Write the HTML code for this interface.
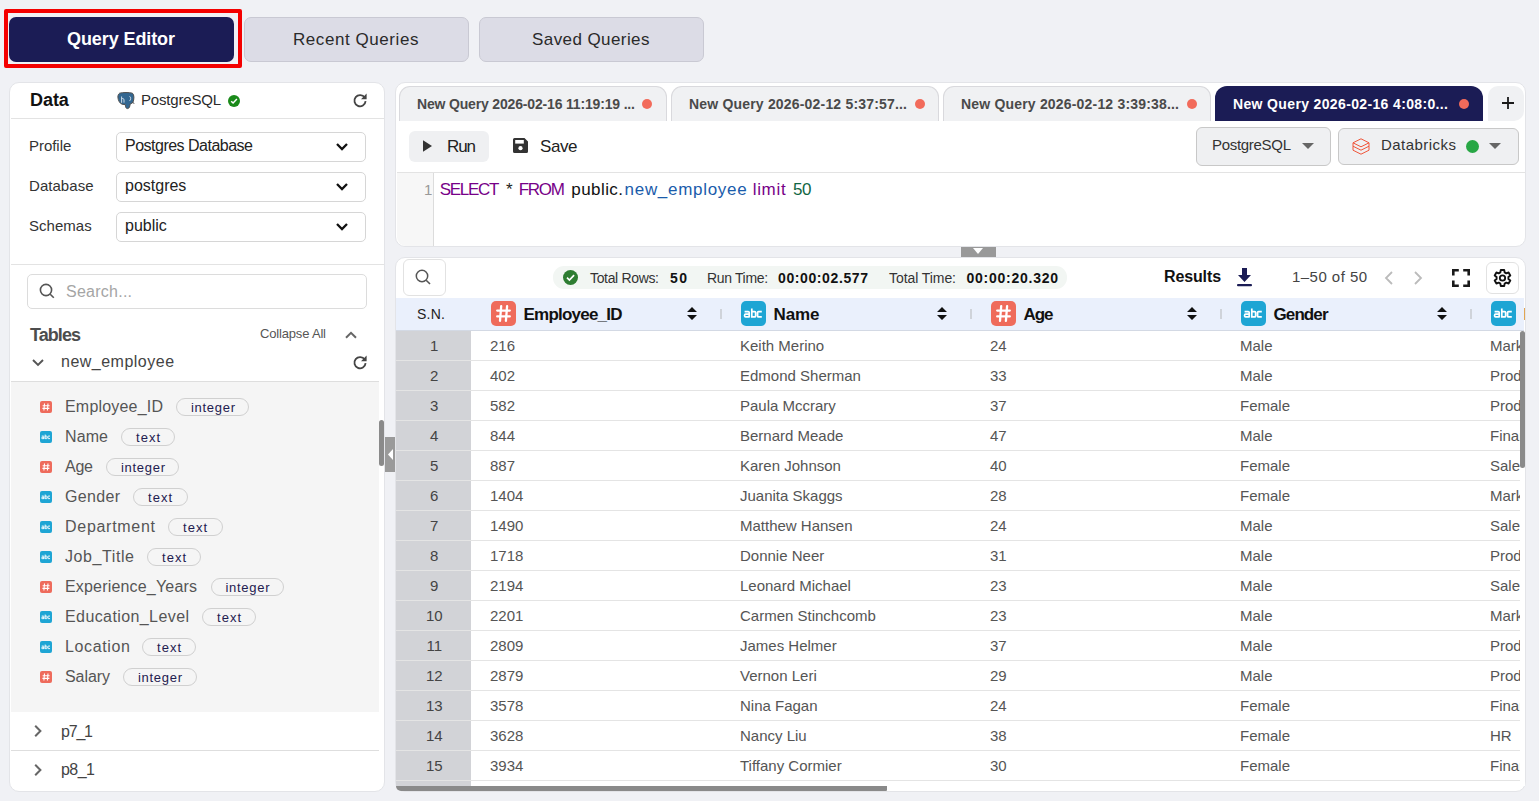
<!DOCTYPE html>
<html><head><meta charset="utf-8">
<style>
*{box-sizing:border-box;margin:0;padding:0}
html,body{width:1539px;height:801px;overflow:hidden;background:#f0f1f5;font-family:"Liberation Sans",sans-serif;color:#333;position:relative}
.a{position:absolute}
.t{white-space:nowrap;line-height:1}
svg{position:absolute;overflow:visible}
</style></head><body>
<div class="a" style="left:4px;top:9px;width:238px;height:59px;border:4px solid #f40000;border-radius:2px"></div>
<div class="a" style="left:9px;top:17px;width:225px;height:45px;background:#1b1c55;border-radius:7px"></div>
<div class="a" style="left:244px;top:17px;width:225px;height:45px;background:#dcdce6;border:1px solid #c9c9d3;border-radius:7px"></div>
<div class="a" style="left:479px;top:17px;width:225px;height:45px;background:#dcdce6;border:1px solid #c9c9d3;border-radius:7px"></div>
<div class="a t" style="left:67.0px;top:30px;font-size:18px;color:#fff;font-weight:bold;letter-spacing:-0.090px;">Query Editor</div>
<div class="a t" style="left:293.0px;top:31px;font-size:17px;color:#2a2a2a;letter-spacing:0.565px;">Recent Queries</div>
<div class="a t" style="left:532.0px;top:31px;font-size:17px;color:#2a2a2a;letter-spacing:0.420px;">Saved Queries</div>
<div class="a" style="left:9px;top:82px;width:376px;height:710px;background:#fff;border:1px solid #e3e4e8;border-radius:10px"></div>
<div class="a" style="left:11px;top:118px;width:373px;height:1px;background:#e3e3e3"></div>
<div class="a t" style="left:30.0px;top:91px;font-size:18px;color:#111;font-weight:bold;letter-spacing:-0.050px;">Data</div>
<svg style="left:117px;top:92px" width="18" height="17" viewBox="0 0 18 17"><path d="M2.6 1.2C5.5.3 12.5.3 15.4 1.2 17.4 2.6 17.3 7.5 15.8 10.6L13.1 12.2C12.9 14.3 12.5 16.3 10.6 16.6 8.9 16.8 8.4 14.8 8.3 12.6L5.2 12.3C2.6 11.4 1 8.2.9 5 .9 3.4 1.4 2 2.6 1.2Z" fill="#336791" stroke="#505050" stroke-width="1"/><path d="M4.6 4.5v6.3M4.6 6.8c1.3-.6 2.4-.3 2.4 1.2v2.6M12.6 4.3c1.4.8 1.4 3.5 0 4.6" stroke="#dfe8f0" stroke-width=".9" fill="none"/><path d="M15.5 10.5l1.8.9" stroke="#444" stroke-width="1"/></svg>
<div class="a t" style="left:141.0px;top:92px;font-size:15px;color:#2b2b2b;letter-spacing:-0.186px;">PostgreSQL</div>
<svg style="left:228px;top:94.5px" width="12" height="12" viewBox="0 0 12 12"><circle cx="6" cy="6" r="6" fill="#1a8a1a"/><path d="M3.2 6.2l1.9 1.8 3.8-3.9" stroke="#fff" stroke-width="1.5" fill="none"/></svg>
<svg style="left:352.5px;top:93px" width="14" height="14" viewBox="0 0 14 14"><path d="M11.7 4.6A5.6 5.6 0 1 0 12.6 8.2" stroke="#444" stroke-width="1.8" fill="none"/><path d="M13.6 0.6V6.2H8z" fill="#444"/></svg>
<div class="a" style="left:116px;top:132px;width:250px;height:30px;border:1px solid #d6d6d6;border-radius:5px;background:#fff"></div>
<div class="a t" style="left:29.0px;top:138px;font-size:15px;color:#333;letter-spacing:-0.038px;">Profile</div>
<div class="a t" style="left:125.0px;top:138px;font-size:16px;color:#222;letter-spacing:-0.505px;">Postgres Database</div>
<svg style="left:335.5px;top:143px" width="12" height="8" viewBox="0 0 12 8"><path d="M1 1l5 5 5-5" stroke="#111" stroke-width="2.3" fill="none"/></svg>
<div class="a" style="left:116px;top:172px;width:250px;height:30px;border:1px solid #d6d6d6;border-radius:5px;background:#fff"></div>
<div class="a t" style="left:29.0px;top:178px;font-size:15px;color:#333;letter-spacing:0.043px;">Database</div>
<div class="a t" style="left:125.0px;top:178px;font-size:16px;color:#222;">postgres</div>
<svg style="left:335.5px;top:183px" width="12" height="8" viewBox="0 0 12 8"><path d="M1 1l5 5 5-5" stroke="#111" stroke-width="2.3" fill="none"/></svg>
<div class="a" style="left:116px;top:212px;width:250px;height:30px;border:1px solid #d6d6d6;border-radius:5px;background:#fff"></div>
<div class="a t" style="left:29.0px;top:218px;font-size:15px;color:#333;letter-spacing:0.025px;">Schemas</div>
<div class="a t" style="left:125.0px;top:218px;font-size:16px;color:#222;">public</div>
<svg style="left:335.5px;top:223px" width="12" height="8" viewBox="0 0 12 8"><path d="M1 1l5 5 5-5" stroke="#111" stroke-width="2.3" fill="none"/></svg>
<div class="a" style="left:11px;top:264px;width:373px;height:1px;background:#e3e3e3"></div>
<div class="a" style="left:27px;top:274px;width:340px;height:35px;border:1px solid #dcdcdc;border-radius:5px;background:#fff"></div>
<svg style="left:39px;top:283px" width="16" height="16" viewBox="0 0 16 16"><circle cx="7" cy="7" r="5.6" stroke="#555" stroke-width="1.6" fill="none"/><path d="M11.2 11.2l3.6 3.6" stroke="#555" stroke-width="1.6"/></svg>
<div class="a t" style="left:66.0px;top:284px;font-size:16px;color:#a5a5a5;letter-spacing:0.250px;">Search...</div>
<div class="a t" style="left:30.0px;top:326px;font-size:18px;color:#4d4d4d;font-weight:bold;letter-spacing:-0.942px;">Tables</div>
<div class="a t" style="left:260.0px;top:327px;font-size:13px;color:#555;letter-spacing:-0.175px;">Collapse All</div>
<svg style="left:345px;top:331px" width="12" height="8" viewBox="0 0 12 8"><path d="M1 6.8l5-5 5 5" stroke="#666" stroke-width="2" fill="none"/></svg>
<svg style="left:32px;top:359px" width="12" height="8" viewBox="0 0 12 8"><path d="M1 1l5 5 5-5" stroke="#555" stroke-width="1.9" fill="none"/></svg>
<div class="a t" style="left:61.0px;top:354px;font-size:16px;color:#444;letter-spacing:0.491px;">new_employee</div>
<svg style="left:352.5px;top:355px" width="14" height="14" viewBox="0 0 14 14"><path d="M11.7 4.6A5.6 5.6 0 1 0 12.6 8.2" stroke="#444" stroke-width="1.8" fill="none"/><path d="M13.6 0.6V6.2H8z" fill="#444"/></svg>
<div class="a" style="left:11px;top:381px;width:368px;height:1px;background:#dedede"></div>
<div class="a" style="left:11px;top:382px;width:368px;height:330px;background:#f5f5f5"></div>
<svg style="left:40px;top:401px" width="12" height="12" viewBox="0 0 12 12"><rect width="12" height="12" rx="2" fill="#ee6b5c"/><path d="M4.5 2.5l-.6 7M8 2.5l-.6 7M2.6 4.8h7M2.4 7.4h7" stroke="#fff" stroke-width="1.1"/></svg>
<div class="a t" style="left:65.0px;top:399px;font-size:16px;color:#555;letter-spacing:0.192px;">Employee_ID</div>
<div class="a" style="left:176px;top:398px;width:73px;height:18px;border:1px solid #d0d0d0;border-radius:9px"></div>
<div class="a t" style="left:191.0px;top:401px;font-size:13px;color:#1e2050;letter-spacing:0.703px;">integer</div>
<svg style="left:40px;top:431px" width="12" height="12" viewBox="0 0 12 12"><g transform="scale(0.48)"><rect width="25" height="25" rx="4" fill="#1ea5d4"/><path d="M3.6 10.6H7.2Q8.2 10.6 8.2 11.6V16.6M8.2 13.2H4.6Q3.6 13.2 3.6 14.2V15Q3.6 15.9 4.6 15.9H8.2M10.8 7.4V15.9H13.6Q14.6 15.9 14.6 14.9V11.6Q14.6 10.6 13.6 10.6H10.8M20.8 10.6H17.6Q16.6 10.6 16.6 11.6V14.9Q16.6 15.9 17.6 15.9H20.8" stroke="#fff" stroke-width="2" fill="none"/></g></svg>
<div class="a t" style="left:65.0px;top:429px;font-size:16px;color:#555;letter-spacing:0.093px;">Name</div>
<div class="a" style="left:121px;top:428px;width:53.5px;height:18px;border:1px solid #d0d0d0;border-radius:9px"></div>
<div class="a t" style="left:136.0px;top:431px;font-size:13px;color:#1e2050;letter-spacing:1.023px;">text</div>
<svg style="left:40px;top:461px" width="12" height="12" viewBox="0 0 12 12"><rect width="12" height="12" rx="2" fill="#ee6b5c"/><path d="M4.5 2.5l-.6 7M8 2.5l-.6 7M2.6 4.8h7M2.4 7.4h7" stroke="#fff" stroke-width="1.1"/></svg>
<div class="a t" style="left:65.0px;top:459px;font-size:16px;color:#555;letter-spacing:-0.240px;">Age</div>
<div class="a" style="left:106px;top:458px;width:73px;height:18px;border:1px solid #d0d0d0;border-radius:9px"></div>
<div class="a t" style="left:121.0px;top:461px;font-size:13px;color:#1e2050;letter-spacing:0.703px;">integer</div>
<svg style="left:40px;top:491px" width="12" height="12" viewBox="0 0 12 12"><g transform="scale(0.48)"><rect width="25" height="25" rx="4" fill="#1ea5d4"/><path d="M3.6 10.6H7.2Q8.2 10.6 8.2 11.6V16.6M8.2 13.2H4.6Q3.6 13.2 3.6 14.2V15Q3.6 15.9 4.6 15.9H8.2M10.8 7.4V15.9H13.6Q14.6 15.9 14.6 14.9V11.6Q14.6 10.6 13.6 10.6H10.8M20.8 10.6H17.6Q16.6 10.6 16.6 11.6V14.9Q16.6 15.9 17.6 15.9H20.8" stroke="#fff" stroke-width="2" fill="none"/></g></svg>
<div class="a t" style="left:65.0px;top:489px;font-size:16px;color:#555;letter-spacing:0.328px;">Gender</div>
<div class="a" style="left:133px;top:488px;width:54.5px;height:18px;border:1px solid #d0d0d0;border-radius:9px"></div>
<div class="a t" style="left:148.0px;top:491px;font-size:13px;color:#1e2050;letter-spacing:1.023px;">text</div>
<svg style="left:40px;top:521px" width="12" height="12" viewBox="0 0 12 12"><g transform="scale(0.48)"><rect width="25" height="25" rx="4" fill="#1ea5d4"/><path d="M3.6 10.6H7.2Q8.2 10.6 8.2 11.6V16.6M8.2 13.2H4.6Q3.6 13.2 3.6 14.2V15Q3.6 15.9 4.6 15.9H8.2M10.8 7.4V15.9H13.6Q14.6 15.9 14.6 14.9V11.6Q14.6 10.6 13.6 10.6H10.8M20.8 10.6H17.6Q16.6 10.6 16.6 11.6V14.9Q16.6 15.9 17.6 15.9H20.8" stroke="#fff" stroke-width="2" fill="none"/></g></svg>
<div class="a t" style="left:65.0px;top:519px;font-size:16px;color:#555;letter-spacing:0.711px;">Department</div>
<div class="a" style="left:168px;top:518px;width:54.599999999999994px;height:18px;border:1px solid #d0d0d0;border-radius:9px"></div>
<div class="a t" style="left:183.0px;top:521px;font-size:13px;color:#1e2050;letter-spacing:1.023px;">text</div>
<svg style="left:40px;top:551px" width="12" height="12" viewBox="0 0 12 12"><g transform="scale(0.48)"><rect width="25" height="25" rx="4" fill="#1ea5d4"/><path d="M3.6 10.6H7.2Q8.2 10.6 8.2 11.6V16.6M8.2 13.2H4.6Q3.6 13.2 3.6 14.2V15Q3.6 15.9 4.6 15.9H8.2M10.8 7.4V15.9H13.6Q14.6 15.9 14.6 14.9V11.6Q14.6 10.6 13.6 10.6H10.8M20.8 10.6H17.6Q16.6 10.6 16.6 11.6V14.9Q16.6 15.9 17.6 15.9H20.8" stroke="#fff" stroke-width="2" fill="none"/></g></svg>
<div class="a t" style="left:65.0px;top:549px;font-size:16px;color:#555;letter-spacing:0.585px;">Job_Title</div>
<div class="a" style="left:147px;top:548px;width:53.5px;height:18px;border:1px solid #d0d0d0;border-radius:9px"></div>
<div class="a t" style="left:162.0px;top:551px;font-size:13px;color:#1e2050;letter-spacing:1.023px;">text</div>
<svg style="left:40px;top:581px" width="12" height="12" viewBox="0 0 12 12"><rect width="12" height="12" rx="2" fill="#ee6b5c"/><path d="M4.5 2.5l-.6 7M8 2.5l-.6 7M2.6 4.8h7M2.4 7.4h7" stroke="#fff" stroke-width="1.1"/></svg>
<div class="a t" style="left:65.0px;top:579px;font-size:16px;color:#555;letter-spacing:0.181px;">Experience_Years</div>
<div class="a" style="left:210.5px;top:578px;width:73.10000000000002px;height:18px;border:1px solid #d0d0d0;border-radius:9px"></div>
<div class="a t" style="left:225.5px;top:581px;font-size:13px;color:#1e2050;letter-spacing:0.703px;">integer</div>
<svg style="left:40px;top:611px" width="12" height="12" viewBox="0 0 12 12"><g transform="scale(0.48)"><rect width="25" height="25" rx="4" fill="#1ea5d4"/><path d="M3.6 10.6H7.2Q8.2 10.6 8.2 11.6V16.6M8.2 13.2H4.6Q3.6 13.2 3.6 14.2V15Q3.6 15.9 4.6 15.9H8.2M10.8 7.4V15.9H13.6Q14.6 15.9 14.6 14.9V11.6Q14.6 10.6 13.6 10.6H10.8M20.8 10.6H17.6Q16.6 10.6 16.6 11.6V14.9Q16.6 15.9 17.6 15.9H20.8" stroke="#fff" stroke-width="2" fill="none"/></g></svg>
<div class="a t" style="left:65.0px;top:609px;font-size:16px;color:#555;letter-spacing:0.406px;">Education_Level</div>
<div class="a" style="left:202px;top:608px;width:53.69999999999999px;height:18px;border:1px solid #d0d0d0;border-radius:9px"></div>
<div class="a t" style="left:217.0px;top:611px;font-size:13px;color:#1e2050;letter-spacing:1.023px;">text</div>
<svg style="left:40px;top:641px" width="12" height="12" viewBox="0 0 12 12"><g transform="scale(0.48)"><rect width="25" height="25" rx="4" fill="#1ea5d4"/><path d="M3.6 10.6H7.2Q8.2 10.6 8.2 11.6V16.6M8.2 13.2H4.6Q3.6 13.2 3.6 14.2V15Q3.6 15.9 4.6 15.9H8.2M10.8 7.4V15.9H13.6Q14.6 15.9 14.6 14.9V11.6Q14.6 10.6 13.6 10.6H10.8M20.8 10.6H17.6Q16.6 10.6 16.6 11.6V14.9Q16.6 15.9 17.6 15.9H20.8" stroke="#fff" stroke-width="2" fill="none"/></g></svg>
<div class="a t" style="left:65.0px;top:639px;font-size:16px;color:#555;letter-spacing:0.646px;">Location</div>
<div class="a" style="left:142px;top:638px;width:54px;height:18px;border:1px solid #d0d0d0;border-radius:9px"></div>
<div class="a t" style="left:157.0px;top:641px;font-size:13px;color:#1e2050;letter-spacing:1.023px;">text</div>
<svg style="left:40px;top:671px" width="12" height="12" viewBox="0 0 12 12"><rect width="12" height="12" rx="2" fill="#ee6b5c"/><path d="M4.5 2.5l-.6 7M8 2.5l-.6 7M2.6 4.8h7M2.4 7.4h7" stroke="#fff" stroke-width="1.1"/></svg>
<div class="a t" style="left:65.0px;top:669px;font-size:16px;color:#555;letter-spacing:-0.072px;">Salary</div>
<div class="a" style="left:123px;top:668px;width:73.69999999999999px;height:18px;border:1px solid #d0d0d0;border-radius:9px"></div>
<div class="a t" style="left:138.0px;top:671px;font-size:13px;color:#1e2050;letter-spacing:0.703px;">integer</div>
<svg style="left:34px;top:725px" width="8" height="12" viewBox="0 0 8 12"><path d="M1.2 .8l5.2 5.2-5.2 5.2" stroke="#666" stroke-width="2" fill="none"/></svg>
<div class="a t" style="left:61.0px;top:724px;font-size:16px;color:#444;letter-spacing:-1.200px;">p7_1</div>
<div class="a" style="left:11px;top:750px;width:368px;height:1px;background:#dedede"></div>
<svg style="left:34px;top:764px" width="8" height="12" viewBox="0 0 8 12"><path d="M1.2 .8l5.2 5.2-5.2 5.2" stroke="#666" stroke-width="2" fill="none"/></svg>
<div class="a t" style="left:61.0px;top:762px;font-size:16px;color:#444;letter-spacing:-0.533px;">p8_1</div>
<div class="a" style="left:379px;top:420px;width:5px;height:46px;background:#8a8a8a;border-radius:3px"></div>
<div class="a" style="left:385px;top:437px;width:10px;height:35px;background:#9a9a9a"></div>
<svg style="left:388px;top:449px" width="5" height="11" viewBox="0 0 5 11"><path d="M5 0v11L0 5.5z" fill="#fff"/></svg>
<div class="a" style="left:395px;top:82px;width:1131px;height:165px;background:#fff;border:1px solid #e3e4e8;border-radius:10px"></div>
<div class="a" style="left:399px;top:86px;width:268px;height:35px;background:#f0f1f3;border:1px solid #d9d9dd;border-bottom:none;border-radius:11px 11px 0 0"></div>
<div class="a t" style="left:417.0px;top:97px;font-size:14px;color:#4a4a4a;font-weight:bold;letter-spacing:-0.168px;">New Query 2026-02-16 11:19:19 ...</div>
<div class="a" style="left:642px;top:99px;width:10px;height:10px;background:#f26b5b;border-radius:50%"></div>
<div class="a" style="left:671px;top:86px;width:268px;height:35px;background:#f0f1f3;border:1px solid #d9d9dd;border-bottom:none;border-radius:11px 11px 0 0"></div>
<div class="a t" style="left:689.0px;top:97px;font-size:14px;color:#4a4a4a;font-weight:bold;letter-spacing:0.185px;">New Query 2026-02-12 5:37:57...</div>
<div class="a" style="left:915px;top:99px;width:10px;height:10px;background:#f26b5b;border-radius:50%"></div>
<div class="a" style="left:943px;top:86px;width:268px;height:35px;background:#f0f1f3;border:1px solid #d9d9dd;border-bottom:none;border-radius:11px 11px 0 0"></div>
<div class="a t" style="left:961.0px;top:97px;font-size:14px;color:#4a4a4a;font-weight:bold;letter-spacing:0.185px;">New Query 2026-02-12 3:39:38...</div>
<div class="a" style="left:1187px;top:99px;width:10px;height:10px;background:#f26b5b;border-radius:50%"></div>
<div class="a" style="left:1215px;top:86px;width:268px;height:35px;background:#1b1c55;border-radius:12px 12px 0 0"></div>
<div class="a t" style="left:1233.0px;top:97px;font-size:14px;color:#fff;font-weight:bold;letter-spacing:0.356px;">New Query 2026-02-16 4:08:0...</div>
<div class="a" style="left:1459px;top:99px;width:10px;height:10px;background:#f26b5b;border-radius:50%"></div>
<div class="a" style="left:1488px;top:86px;width:36px;height:35px;background:#f0f1f3;border-radius:10px 10px 10px 0"></div>
<svg style="left:1502px;top:97px" width="12" height="12" viewBox="0 0 12 12"><path d="M6 0v12M0 6h12" stroke="#1a1a1a" stroke-width="1.8"/></svg>
<div class="a" style="left:409px;top:131px;width:80px;height:31px;background:#eff0f2;border-radius:6px"></div>
<svg style="left:422.5px;top:140px" width="9" height="12" viewBox="0 0 9 12"><path d="M0 .3v11.4L9 6z" fill="#333"/></svg>
<div class="a t" style="left:447.0px;top:138px;font-size:17px;color:#222;letter-spacing:-1.098px;">Run</div>
<svg style="left:512.5px;top:138.3px" width="15" height="15" viewBox="0 0 15 15"><path d="M0 1.5A1.5 1.5 0 0 1 1.5 0h10L15 3.5v10A1.5 1.5 0 0 1 13.5 15h-12A1.5 1.5 0 0 1 0 13.5z" fill="#333"/><rect x="2.2" y="2" width="8.6" height="3.6" fill="#fff"/><circle cx="7.5" cy="10.2" r="2.1" fill="#fff"/></svg>
<div class="a t" style="left:540.0px;top:138px;font-size:17px;color:#222;letter-spacing:-0.420px;">Save</div>
<div class="a" style="left:1196px;top:127px;width:135px;height:39px;background:#eff0f2;border:1px solid #c8c8c8;border-radius:6px"></div>
<div class="a t" style="left:1212.0px;top:137px;font-size:15px;color:#333;letter-spacing:-0.297px;">PostgreSQL</div>
<svg style="left:1302px;top:143px" width="12" height="6" viewBox="0 0 12 6"><path d="M0 0h12L6 6z" fill="#666"/></svg>
<div class="a" style="left:1338px;top:128px;width:181px;height:37px;background:#eff0f2;border:1px solid #c8c8c8;border-radius:6px"></div>
<svg style="left:1352px;top:137.5px" width="18" height="18" viewBox="0 0 18 18"><g fill="none" stroke="#f0553a" stroke-width="1"><path d="M9 .8L17 4.8 9 8.8 1 4.8z"/><path d="M1 4.8v3.4l8 4 8-4V4.8"/><path d="M1 8.2v4l8 4 8-4v-4"/></g></svg>
<div class="a t" style="left:1381.0px;top:137px;font-size:15px;color:#333;letter-spacing:0.458px;">Databricks</div>
<div class="a" style="left:1466px;top:140px;width:13px;height:13px;background:#28a745;border-radius:50%"></div>
<svg style="left:1489px;top:143px" width="12" height="6" viewBox="0 0 12 6"><path d="M0 0h12L6 6z" fill="#666"/></svg>
<div class="a" style="left:397px;top:172px;width:1128px;height:1px;background:#e3e3e3"></div>
<div class="a" style="left:397px;top:173px;width:36px;height:73px;background:#f7f7f7;border-radius:0 0 0 9px"></div>
<div class="a" style="left:433px;top:173px;width:1px;height:73px;background:#dcdcdc"></div>
<div class="a t" style="left:424.0px;top:182px;font-size:15px;color:#999;">1</div>
<div class="a t" style="left:439.7px;top:181px;font-size:17px;color:#770088;letter-spacing:-1.266px;">SELECT</div>
<div class="a t" style="left:506.0px;top:181px;font-size:17px;color:#222;">*</div>
<div class="a t" style="left:518.7px;top:181px;font-size:17px;color:#770088;letter-spacing:-1.255px;">FROM</div>
<div class="a t" style="left:571.3px;top:181px;font-size:17px;color:#111;letter-spacing:0.428px;">public.</div>
<div class="a t" style="left:624.6px;top:181px;font-size:17px;color:#1a5cab;letter-spacing:0.698px;">new_employee</div>
<div class="a t" style="left:752.7px;top:181px;font-size:17px;color:#770088;letter-spacing:0.681px;">limit</div>
<div class="a t" style="left:793.0px;top:181px;font-size:17px;color:#116644;letter-spacing:-0.370px;">50</div>
<div class="a" style="left:961px;top:247px;width:35px;height:10px;background:#999"></div>
<svg style="left:973px;top:248px" width="10" height="6" viewBox="0 0 10 6"><path d="M0 0h10L5 6z" fill="#fff"/></svg>
<div class="a" style="left:395px;top:257px;width:1131px;height:535px;background:#fff;border:1px solid #e3e4e8;border-radius:10px;overflow:hidden"></div>
<div class="a" style="left:403px;top:259px;width:43px;height:37px;border:1px solid #e2e2e2;border-radius:6px"></div>
<svg style="left:415px;top:269px" width="16" height="16" viewBox="0 0 16 16"><circle cx="7" cy="7" r="5.7" stroke="#555" stroke-width="1.5" fill="none"/><path d="M11.2 11.2l3.8 3.8" stroke="#555" stroke-width="1.6"/></svg>
<div class="a" style="left:553px;top:266px;width:514px;height:23px;background:#f2f6f3;border-radius:11px"></div>
<svg style="left:563px;top:270px" width="15" height="15" viewBox="0 0 15 15"><circle cx="7.5" cy="7.5" r="7.5" fill="#2e7d32"/><path d="M4 7.7l2.4 2.3 4.7-4.8" stroke="#fff" stroke-width="1.7" fill="none"/></svg>
<div class="a t" style="left:590.0px;top:271px;font-size:14px;color:#333;letter-spacing:-0.338px;">Total Rows:</div>
<div class="a t" style="left:670.0px;top:271px;font-size:14px;color:#111;font-weight:bold;letter-spacing:1.460px;">50</div>
<div class="a t" style="left:707.0px;top:271px;font-size:14px;color:#333;letter-spacing:-0.346px;">Run Time:</div>
<div class="a t" style="left:778.0px;top:271px;font-size:14px;color:#111;font-weight:bold;letter-spacing:0.609px;">00:00:02.577</div>
<div class="a t" style="left:889.0px;top:271px;font-size:14px;color:#333;letter-spacing:-0.069px;">Total Time:</div>
<div class="a t" style="left:966.5px;top:271px;font-size:14px;color:#111;font-weight:bold;letter-spacing:0.745px;">00:00:20.320</div>
<div class="a t" style="left:1164.0px;top:269px;font-size:16px;color:#111;font-weight:bold;letter-spacing:-0.127px;">Results</div>
<svg style="left:1237px;top:268px" width="15" height="19" viewBox="0 0 15 19"><path d="M5 0h5v7h4L7.5 14 1 7h4z" fill="#1b1c55"/><rect x="0" y="16" width="15" height="2.2" rx="1" fill="#1b1c55"/></svg>
<div class="a t" style="left:1292.0px;top:269px;font-size:15px;color:#444;letter-spacing:0.458px;">1–50 of 50</div>
<svg style="left:1383px;top:271px" width="11" height="14" viewBox="0 0 11 14"><path d="M9 1L3 7l6 6" stroke="#bbb" stroke-width="1.8" fill="none"/></svg>
<svg style="left:1413px;top:271px" width="11" height="14" viewBox="0 0 11 14"><path d="M2 1l6 6-6 6" stroke="#bbb" stroke-width="1.8" fill="none"/></svg>
<svg style="left:1452px;top:269px" width="18" height="18" viewBox="0 0 18 18"><path d="M1.3 6.5V1.3h5.5M11.2 1.3h5.5v5.2M16.7 11.5v5.2h-5.5M6.8 16.7H1.3v-5.2" stroke="#1a1a1a" stroke-width="2.6" fill="none"/></svg>
<div class="a" style="left:1486px;top:262px;width:33px;height:32px;border:1px solid #e2e2e2;border-radius:6px"></div>
<svg style="left:1494px;top:270px" width="17" height="16" viewBox="0 0 17 16"><path d="M10.65 2.40 L10.20 -0.02 L6.80 -0.02 L6.35 2.40 L4.72 3.34 L2.41 2.51 L0.70 5.47 L2.57 7.06 L2.57 8.94 L0.70 10.53 L2.41 13.49 L4.72 12.66 L6.35 13.60 L6.80 16.02 L10.20 16.02 L10.65 13.60 L12.28 12.66 L14.59 13.49 L16.30 10.53 L14.43 8.94 L14.43 7.06 L16.30 5.47 L14.59 2.51 L12.28 3.34Z" fill="none" stroke="#111" stroke-width="1.9" stroke-linejoin="round"/><circle cx="8.5" cy="8" r="2.7" fill="none" stroke="#111" stroke-width="1.8"/></svg>
<div class="a" style="left:396px;top:298px;width:1129px;height:488px;overflow:hidden">
<div class="a" style="left:0;top:0;width:1128px;height:33px;background:#eaf0fc;border-bottom:1px solid #d3d9e4"></div>
<div class="a t" style="left:21.0px;top:9px;font-size:14px;color:#222;letter-spacing:0.257px;">S.N.</div>
<svg style="left:95px;top:3px" width="25" height="25" viewBox="0 0 25 25"><rect width="25" height="25" rx="5" fill="#ef6b5b"/><path d="M10.2 5.2l-1.2 14.6M16.1 5.2l-1.2 14.6M6.2 9.6h12.6M6.2 15.4h12.6" stroke="#fff" stroke-width="2.3" stroke-linecap="round"/></svg>
<div class="a t" style="left:127.5px;top:8px;font-size:17px;color:#111;font-weight:bold;letter-spacing:-0.776px;">Employee_ID</div>
<svg style="left:291px;top:9px" width="10" height="13" viewBox="0 0 10 13"><path d="M0 5L5 0l5 5z M0 8h10L5 13z" fill="#111"/></svg>
<div class="a" style="left:324px;top:11px;width:2px;height:10px;background:#cfd3da"></div>
<svg style="left:345px;top:3px" width="25" height="25" viewBox="0 0 25 25"><rect width="25" height="25" rx="5" fill="#1ea5d4"/><path d="M3.6 10.6H7.2Q8.2 10.6 8.2 11.6V16.6M8.2 13.2H4.6Q3.6 13.2 3.6 14.2V15Q3.6 15.9 4.6 15.9H8.2M10.8 7.4V15.9H13.6Q14.6 15.9 14.6 14.9V11.6Q14.6 10.6 13.6 10.6H10.8M20.8 10.6H17.6Q16.6 10.6 16.6 11.6V14.9Q16.6 15.9 17.6 15.9H20.8" stroke="#fff" stroke-width="1.7" fill="none"/></svg>
<div class="a t" style="left:377.5px;top:8px;font-size:17px;color:#111;font-weight:bold;letter-spacing:-0.108px;">Name</div>
<svg style="left:541px;top:9px" width="10" height="13" viewBox="0 0 10 13"><path d="M0 5L5 0l5 5z M0 8h10L5 13z" fill="#111"/></svg>
<div class="a" style="left:574px;top:11px;width:2px;height:10px;background:#cfd3da"></div>
<svg style="left:595px;top:3px" width="25" height="25" viewBox="0 0 25 25"><rect width="25" height="25" rx="5" fill="#ef6b5b"/><path d="M10.2 5.2l-1.2 14.6M16.1 5.2l-1.2 14.6M6.2 9.6h12.6M6.2 15.4h12.6" stroke="#fff" stroke-width="2.3" stroke-linecap="round"/></svg>
<div class="a t" style="left:627.5px;top:8px;font-size:17px;color:#111;font-weight:bold;letter-spacing:-1.065px;">Age</div>
<svg style="left:791px;top:9px" width="10" height="13" viewBox="0 0 10 13"><path d="M0 5L5 0l5 5z M0 8h10L5 13z" fill="#111"/></svg>
<div class="a" style="left:824px;top:11px;width:2px;height:10px;background:#cfd3da"></div>
<svg style="left:845px;top:3px" width="25" height="25" viewBox="0 0 25 25"><rect width="25" height="25" rx="5" fill="#1ea5d4"/><path d="M3.6 10.6H7.2Q8.2 10.6 8.2 11.6V16.6M8.2 13.2H4.6Q3.6 13.2 3.6 14.2V15Q3.6 15.9 4.6 15.9H8.2M10.8 7.4V15.9H13.6Q14.6 15.9 14.6 14.9V11.6Q14.6 10.6 13.6 10.6H10.8M20.8 10.6H17.6Q16.6 10.6 16.6 11.6V14.9Q16.6 15.9 17.6 15.9H20.8" stroke="#fff" stroke-width="1.7" fill="none"/></svg>
<div class="a t" style="left:877.5px;top:8px;font-size:17px;color:#111;font-weight:bold;letter-spacing:-0.900px;">Gender</div>
<svg style="left:1041px;top:9px" width="10" height="13" viewBox="0 0 10 13"><path d="M0 5L5 0l5 5z M0 8h10L5 13z" fill="#111"/></svg>
<div class="a" style="left:1074px;top:11px;width:2px;height:10px;background:#cfd3da"></div>
<svg style="left:1095px;top:3px" width="25" height="25" viewBox="0 0 25 25"><rect width="25" height="25" rx="5" fill="#1ea5d4"/><path d="M3.6 10.6H7.2Q8.2 10.6 8.2 11.6V16.6M8.2 13.2H4.6Q3.6 13.2 3.6 14.2V15Q3.6 15.9 4.6 15.9H8.2M10.8 7.4V15.9H13.6Q14.6 15.9 14.6 14.9V11.6Q14.6 10.6 13.6 10.6H10.8M20.8 10.6H17.6Q16.6 10.6 16.6 11.6V14.9Q16.6 15.9 17.6 15.9H20.8" stroke="#fff" stroke-width="1.7" fill="none"/></svg>
<div class="a t" style="left:1127.5px;top:8px;font-size:17px;color:#111;font-weight:bold;letter-spacing:0.063px;">Department</div>
<svg style="left:1291px;top:9px" width="10" height="13" viewBox="0 0 10 13"><path d="M0 5L5 0l5 5z M0 8h10L5 13z" fill="#111"/></svg>
<div class="a" style="left:1324px;top:11px;width:2px;height:10px;background:#cfd3da"></div>
<div class="a" style="left:0;top:33px;width:75px;height:30px;background:#d2d3d7"></div>
<div class="a" style="left:0;top:62px;width:1128px;height:1px;background:#e4e4e4"></div>
<div class="a t" style="left:34.1px;top:40px;font-size:15px;color:#444;">1</div>
<div class="a t" style="left:94.0px;top:40px;font-size:15px;color:#555;">216</div>
<div class="a t" style="left:344.0px;top:40px;font-size:15px;color:#555;">Keith Merino</div>
<div class="a t" style="left:594.0px;top:40px;font-size:15px;color:#555;">24</div>
<div class="a t" style="left:844.0px;top:40px;font-size:15px;color:#555;">Male</div>
<div class="a t" style="left:1094.0px;top:40px;font-size:15px;color:#555;">Marketing</div>
<div class="a" style="left:0;top:63px;width:75px;height:30px;background:#d2d3d7"></div>
<div class="a" style="left:0;top:92px;width:1128px;height:1px;background:#e4e4e4"></div>
<div class="a t" style="left:34.1px;top:70px;font-size:15px;color:#444;">2</div>
<div class="a t" style="left:94.0px;top:70px;font-size:15px;color:#555;">402</div>
<div class="a t" style="left:344.0px;top:70px;font-size:15px;color:#555;">Edmond Sherman</div>
<div class="a t" style="left:594.0px;top:70px;font-size:15px;color:#555;">33</div>
<div class="a t" style="left:844.0px;top:70px;font-size:15px;color:#555;">Male</div>
<div class="a t" style="left:1094.0px;top:70px;font-size:15px;color:#555;">Product</div>
<div class="a" style="left:0;top:93px;width:75px;height:30px;background:#d2d3d7"></div>
<div class="a" style="left:0;top:122px;width:1128px;height:1px;background:#e4e4e4"></div>
<div class="a t" style="left:34.1px;top:100px;font-size:15px;color:#444;">3</div>
<div class="a t" style="left:94.0px;top:100px;font-size:15px;color:#555;">582</div>
<div class="a t" style="left:344.0px;top:100px;font-size:15px;color:#555;">Paula Mccrary</div>
<div class="a t" style="left:594.0px;top:100px;font-size:15px;color:#555;">37</div>
<div class="a t" style="left:844.0px;top:100px;font-size:15px;color:#555;">Female</div>
<div class="a t" style="left:1094.0px;top:100px;font-size:15px;color:#555;">Product</div>
<div class="a" style="left:0;top:123px;width:75px;height:30px;background:#d2d3d7"></div>
<div class="a" style="left:0;top:152px;width:1128px;height:1px;background:#e4e4e4"></div>
<div class="a t" style="left:34.1px;top:130px;font-size:15px;color:#444;">4</div>
<div class="a t" style="left:94.0px;top:130px;font-size:15px;color:#555;">844</div>
<div class="a t" style="left:344.0px;top:130px;font-size:15px;color:#555;">Bernard Meade</div>
<div class="a t" style="left:594.0px;top:130px;font-size:15px;color:#555;">47</div>
<div class="a t" style="left:844.0px;top:130px;font-size:15px;color:#555;">Male</div>
<div class="a t" style="left:1094.0px;top:130px;font-size:15px;color:#555;">Finance</div>
<div class="a" style="left:0;top:153px;width:75px;height:30px;background:#d2d3d7"></div>
<div class="a" style="left:0;top:182px;width:1128px;height:1px;background:#e4e4e4"></div>
<div class="a t" style="left:34.1px;top:160px;font-size:15px;color:#444;">5</div>
<div class="a t" style="left:94.0px;top:160px;font-size:15px;color:#555;">887</div>
<div class="a t" style="left:344.0px;top:160px;font-size:15px;color:#555;">Karen Johnson</div>
<div class="a t" style="left:594.0px;top:160px;font-size:15px;color:#555;">40</div>
<div class="a t" style="left:844.0px;top:160px;font-size:15px;color:#555;">Female</div>
<div class="a t" style="left:1094.0px;top:160px;font-size:15px;color:#555;">Sales</div>
<div class="a" style="left:0;top:183px;width:75px;height:30px;background:#d2d3d7"></div>
<div class="a" style="left:0;top:212px;width:1128px;height:1px;background:#e4e4e4"></div>
<div class="a t" style="left:34.1px;top:190px;font-size:15px;color:#444;">6</div>
<div class="a t" style="left:94.0px;top:190px;font-size:15px;color:#555;">1404</div>
<div class="a t" style="left:344.0px;top:190px;font-size:15px;color:#555;">Juanita Skaggs</div>
<div class="a t" style="left:594.0px;top:190px;font-size:15px;color:#555;">28</div>
<div class="a t" style="left:844.0px;top:190px;font-size:15px;color:#555;">Female</div>
<div class="a t" style="left:1094.0px;top:190px;font-size:15px;color:#555;">Marketing</div>
<div class="a" style="left:0;top:213px;width:75px;height:30px;background:#d2d3d7"></div>
<div class="a" style="left:0;top:242px;width:1128px;height:1px;background:#e4e4e4"></div>
<div class="a t" style="left:34.1px;top:220px;font-size:15px;color:#444;">7</div>
<div class="a t" style="left:94.0px;top:220px;font-size:15px;color:#555;">1490</div>
<div class="a t" style="left:344.0px;top:220px;font-size:15px;color:#555;">Matthew Hansen</div>
<div class="a t" style="left:594.0px;top:220px;font-size:15px;color:#555;">24</div>
<div class="a t" style="left:844.0px;top:220px;font-size:15px;color:#555;">Male</div>
<div class="a t" style="left:1094.0px;top:220px;font-size:15px;color:#555;">Sales</div>
<div class="a" style="left:0;top:243px;width:75px;height:30px;background:#d2d3d7"></div>
<div class="a" style="left:0;top:272px;width:1128px;height:1px;background:#e4e4e4"></div>
<div class="a t" style="left:34.1px;top:250px;font-size:15px;color:#444;">8</div>
<div class="a t" style="left:94.0px;top:250px;font-size:15px;color:#555;">1718</div>
<div class="a t" style="left:344.0px;top:250px;font-size:15px;color:#555;">Donnie Neer</div>
<div class="a t" style="left:594.0px;top:250px;font-size:15px;color:#555;">31</div>
<div class="a t" style="left:844.0px;top:250px;font-size:15px;color:#555;">Male</div>
<div class="a t" style="left:1094.0px;top:250px;font-size:15px;color:#555;">Product</div>
<div class="a" style="left:0;top:273px;width:75px;height:30px;background:#d2d3d7"></div>
<div class="a" style="left:0;top:302px;width:1128px;height:1px;background:#e4e4e4"></div>
<div class="a t" style="left:34.1px;top:280px;font-size:15px;color:#444;">9</div>
<div class="a t" style="left:94.0px;top:280px;font-size:15px;color:#555;">2194</div>
<div class="a t" style="left:344.0px;top:280px;font-size:15px;color:#555;">Leonard Michael</div>
<div class="a t" style="left:594.0px;top:280px;font-size:15px;color:#555;">23</div>
<div class="a t" style="left:844.0px;top:280px;font-size:15px;color:#555;">Male</div>
<div class="a t" style="left:1094.0px;top:280px;font-size:15px;color:#555;">Sales</div>
<div class="a" style="left:0;top:303px;width:75px;height:30px;background:#d2d3d7"></div>
<div class="a" style="left:0;top:332px;width:1128px;height:1px;background:#e4e4e4"></div>
<div class="a t" style="left:30.0px;top:310px;font-size:15px;color:#444;">10</div>
<div class="a t" style="left:94.0px;top:310px;font-size:15px;color:#555;">2201</div>
<div class="a t" style="left:344.0px;top:310px;font-size:15px;color:#555;">Carmen Stinchcomb</div>
<div class="a t" style="left:594.0px;top:310px;font-size:15px;color:#555;">23</div>
<div class="a t" style="left:844.0px;top:310px;font-size:15px;color:#555;">Male</div>
<div class="a t" style="left:1094.0px;top:310px;font-size:15px;color:#555;">Marketing</div>
<div class="a" style="left:0;top:333px;width:75px;height:30px;background:#d2d3d7"></div>
<div class="a" style="left:0;top:362px;width:1128px;height:1px;background:#e4e4e4"></div>
<div class="a t" style="left:30.5px;top:340px;font-size:15px;color:#444;">11</div>
<div class="a t" style="left:94.0px;top:340px;font-size:15px;color:#555;">2809</div>
<div class="a t" style="left:344.0px;top:340px;font-size:15px;color:#555;">James Helmer</div>
<div class="a t" style="left:594.0px;top:340px;font-size:15px;color:#555;">37</div>
<div class="a t" style="left:844.0px;top:340px;font-size:15px;color:#555;">Male</div>
<div class="a t" style="left:1094.0px;top:340px;font-size:15px;color:#555;">Product</div>
<div class="a" style="left:0;top:363px;width:75px;height:30px;background:#d2d3d7"></div>
<div class="a" style="left:0;top:392px;width:1128px;height:1px;background:#e4e4e4"></div>
<div class="a t" style="left:30.0px;top:370px;font-size:15px;color:#444;">12</div>
<div class="a t" style="left:94.0px;top:370px;font-size:15px;color:#555;">2879</div>
<div class="a t" style="left:344.0px;top:370px;font-size:15px;color:#555;">Vernon Leri</div>
<div class="a t" style="left:594.0px;top:370px;font-size:15px;color:#555;">29</div>
<div class="a t" style="left:844.0px;top:370px;font-size:15px;color:#555;">Male</div>
<div class="a t" style="left:1094.0px;top:370px;font-size:15px;color:#555;">Product</div>
<div class="a" style="left:0;top:393px;width:75px;height:30px;background:#d2d3d7"></div>
<div class="a" style="left:0;top:422px;width:1128px;height:1px;background:#e4e4e4"></div>
<div class="a t" style="left:30.0px;top:400px;font-size:15px;color:#444;">13</div>
<div class="a t" style="left:94.0px;top:400px;font-size:15px;color:#555;">3578</div>
<div class="a t" style="left:344.0px;top:400px;font-size:15px;color:#555;">Nina Fagan</div>
<div class="a t" style="left:594.0px;top:400px;font-size:15px;color:#555;">24</div>
<div class="a t" style="left:844.0px;top:400px;font-size:15px;color:#555;">Female</div>
<div class="a t" style="left:1094.0px;top:400px;font-size:15px;color:#555;">Finance</div>
<div class="a" style="left:0;top:423px;width:75px;height:30px;background:#d2d3d7"></div>
<div class="a" style="left:0;top:452px;width:1128px;height:1px;background:#e4e4e4"></div>
<div class="a t" style="left:30.0px;top:430px;font-size:15px;color:#444;">14</div>
<div class="a t" style="left:94.0px;top:430px;font-size:15px;color:#555;">3628</div>
<div class="a t" style="left:344.0px;top:430px;font-size:15px;color:#555;">Nancy Liu</div>
<div class="a t" style="left:594.0px;top:430px;font-size:15px;color:#555;">38</div>
<div class="a t" style="left:844.0px;top:430px;font-size:15px;color:#555;">Female</div>
<div class="a t" style="left:1094.0px;top:430px;font-size:15px;color:#555;">HR</div>
<div class="a" style="left:0;top:453px;width:75px;height:30px;background:#d2d3d7"></div>
<div class="a" style="left:0;top:482px;width:1128px;height:1px;background:#e4e4e4"></div>
<div class="a t" style="left:30.0px;top:460px;font-size:15px;color:#444;">15</div>
<div class="a t" style="left:94.0px;top:460px;font-size:15px;color:#555;">3934</div>
<div class="a t" style="left:344.0px;top:460px;font-size:15px;color:#555;">Tiffany Cormier</div>
<div class="a t" style="left:594.0px;top:460px;font-size:15px;color:#555;">30</div>
<div class="a t" style="left:844.0px;top:460px;font-size:15px;color:#555;">Female</div>
<div class="a t" style="left:1094.0px;top:460px;font-size:15px;color:#555;">Finance</div>
<div class="a" style="left:0;top:483px;width:75px;height:30px;background:#d2d3d7"></div>
<div class="a" style="left:0;top:512px;width:1128px;height:1px;background:#e4e4e4"></div>
</div>
<div class="a" style="left:1520px;top:331px;width:5px;height:455px;background:#fff"></div>
<div class="a" style="left:1520px;top:331px;width:5px;height:137px;background:#8a8a8a;border-radius:3px"></div>
<div class="a" style="left:396px;top:786px;width:491px;height:5px;background:#8a8a8a;border-radius:0 0 2px 9px"></div>
</body></html>
